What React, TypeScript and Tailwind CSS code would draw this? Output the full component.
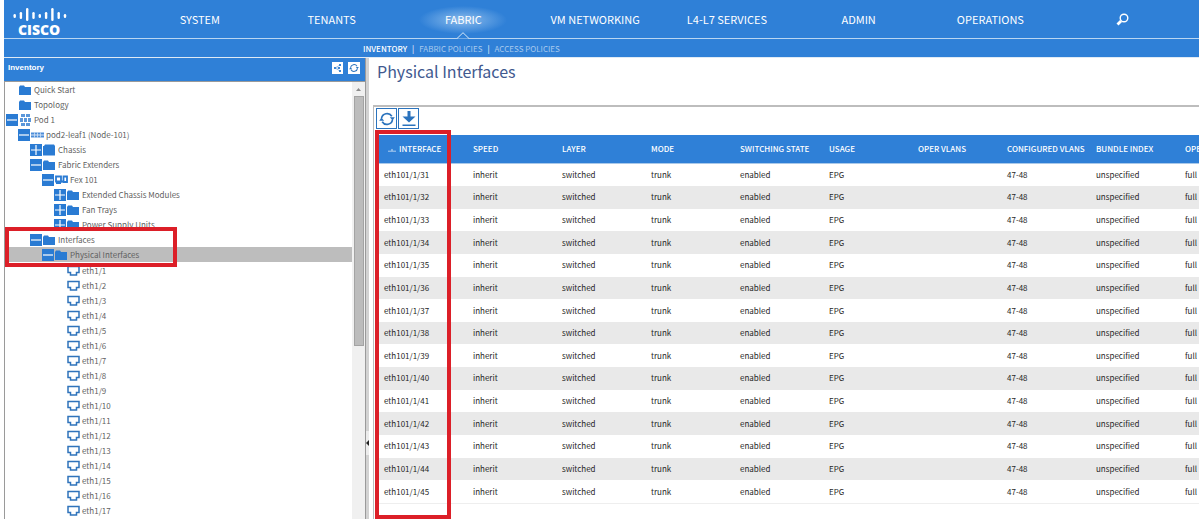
import type { ReactNode } from "react"
import clsx from "clsx"

const navItems = ["SYSTEM", "TENANTS", "FABRIC", "VM NETWORKING", "L4-L7 SERVICES", "ADMIN", "OPERATIONS"]

const subItems = ["INVENTORY", "FABRIC POLICIES", "ACCESS POLICIES"]

type IconName = "folder" | "pod" | "leaf" | "chassis" | "fex" | "port"

type TreeNode = {
  label: string
  icon: IconName
  depth: number
  toggle?: "open" | "closed"
  selected?: boolean
}

const tree: TreeNode[] = [
  { label: "Quick Start", icon: "folder", depth: 0 },
  { label: "Topology", icon: "folder", depth: 0 },
  { label: "Pod 1", icon: "pod", depth: 0, toggle: "open" },
  { label: "pod2-leaf1 (Node-101)", icon: "leaf", depth: 1, toggle: "open" },
  { label: "Chassis", icon: "chassis", depth: 2, toggle: "closed" },
  { label: "Fabric Extenders", icon: "folder", depth: 2, toggle: "open" },
  { label: "Fex 101", icon: "fex", depth: 3, toggle: "open" },
  { label: "Extended Chassis Modules", icon: "folder", depth: 4, toggle: "closed" },
  { label: "Fan Trays", icon: "folder", depth: 4, toggle: "closed" },
  { label: "Power Supply Units", icon: "folder", depth: 4, toggle: "closed" },
  { label: "Interfaces", icon: "folder", depth: 2, toggle: "open" },
  { label: "Physical Interfaces", icon: "folder", depth: 3, toggle: "open", selected: true },
]

const ports: TreeNode[] = Array.from({ length: 17 }, (_, i) => ({
  label: `eth1/${i + 1}`,
  icon: "port",
  depth: 4,
}))

const indent = ["pl-0", "pl-3", "pl-6", "pl-9", "pl-12"]

const columns = [
  "INTERFACE",
  "SPEED",
  "LAYER",
  "MODE",
  "SWITCHING STATE",
  "USAGE",
  "OPER VLANS",
  "CONFIGURED VLANS",
  "BUNDLE INDEX",
  "OPE",
]

const rows = Array.from({ length: 15 }, (_, i) => [
  `eth101/1/${31 + i}`,
  "inherit",
  "switched",
  "trunk",
  "enabled",
  "EPG",
  "",
  "47-48",
  "unspecified",
  "full",
])

const icons: Record<IconName, ReactNode> = {
  folder: <path d="M0 3 1 1.500h4L6 3h6v8H0z" fill="#2a7bd3" />,
  chassis: <path d="M1 2 2 .5h9L12 2v9.500H0V2z" fill="#2a7bd3" />,
  pod: (
    <g fill="#5b97da">
      <path d="M2 0h4v3H2zM7 0h4v3H7zM2 9h4v3H2zM7 9h4v3H7zM1 4h3v4H1zM5 4h3v4H5zM9 4h3v4H9z" />
    </g>
  ),
  leaf: (
    <g fill="#4c8dd8">
      <path d="M0 3.500h13v5H0z" />
      <path d="M0 5.600h13v.8H0zM3 3.500h.7v5H3zM6 3.500h.7v5H6zM9 3.500h.7v5H9z" fill="#dbe8f7" />
    </g>
  ),
  fex: (
    <g fill="none" stroke="#2a7bd3" strokeWidth="1.800">
      <path d="M1 2.500h5v5H1zM8.500 2.500H12v5.500H8.500z" />
      <path d="M6 7.500h3M1 9h5" />
    </g>
  ),
  port: <path d="M1 1.500h11v6H9.500V10h-6V7.500H1z" fill="#fff" stroke="#2f73bb" strokeWidth="1.500" />,
}

function Logo() {
  const bars = [
    [0, 6, 4],
    [6.2, 4, 7],
    [12.5, 0, 13],
    [18.8, 4, 7],
    [25.1, 6, 4],
    [31.4, 4, 7],
    [37.7, 0, 13],
    [44, 4, 7],
    [50.3, 6, 4],
  ]
  return (
    <div className="flex w-[130px] flex-col pt-2 pl-[9px] text-white">
      <svg viewBox="0 0 54 14" className="h-[14px] w-[54px]" aria-hidden="true">
        {bars.map(([x, y, h]) => (
          <rect key={x} x={x + 0.5} y={y} width="2.400" height={h} rx="1.200" fill="#fff" />
        ))}
      </svg>
      <span className="pl-[5px] font-['Open_Sans',sans-serif] text-[14px] leading-4 font-extrabold">CISCO</span>
    </div>
  )
}

function RefreshIcon({ className }: { className: string }) {
  return (
    <svg viewBox="0 0 16 16" className={className} aria-hidden="true">
      <path
        d="M2.500 7.500A5.600 5.600 0 0 1 12.800 5.200M13.500 8.500A5.600 5.600 0 0 1 3.200 10.800"
        fill="none"
        stroke="#2b73bd"
        strokeWidth="1.700"
      />
      <path d="M10.800 6.200h5L13.600 9.200zM.2 9.800h5L2.400 6.800z" fill="#2b73bd" />
    </svg>
  )
}

function TreeRow({ node }: { node: TreeNode }) {
  return (
    <li className={clsx("relative h-[15px] pl-px", node.selected && "bg-[#bdbdbd]")}>
      <div className={clsx("flex h-full items-center", indent[node.depth])}>
        {node.toggle ? (
          <button
            type="button"
            aria-label={node.label}
            className="flex h-3 w-3 items-center justify-center bg-[#2a7bd3]"
          >
            <svg viewBox="0 0 12 12" className="h-3 w-3" aria-hidden="true">
              <path d={node.toggle === "open" ? "M1 6h10" : "M1 6h10M6 1v10"} stroke="#fff" strokeWidth="1.200" />
            </svg>
          </button>
        ) : (
          <span className="w-3" />
        )}
        <svg viewBox="0 0 13 12" className="ml-px h-3 w-[13px]" aria-hidden="true">
          {icons[node.icon]}
        </svg>
        <a href="#" className="pl-[2px] text-[8px] leading-[15px] whitespace-nowrap text-[#5f5f5f]">
          {node.label}
        </a>
      </div>
      {node.selected && (
        <div className="pointer-events-none absolute -top-5 -bottom-[5px] left-0 z-10 w-[172px] border-4 border-[#dc1f28]" />
      )}
    </li>
  )
}

function Header() {
  return (
    <header className="bg-[#2f80d7] text-white">
      <div className="flex h-[39px] border-b border-[#b9d6f2] pr-[11px]">
        <Logo />
        <nav className="grid flex-1 grid-cols-8">
          {navItems.map((item) => (
            <a key={item} href="#" className="relative flex items-center justify-center text-[11px] whitespace-nowrap">
              {item === "FABRIC" && (
                <>
                  <span className="absolute top-1.5 h-7 w-[88px] bg-[radial-gradient(closest-side,#8cbcec,#2f80d700)]" />
                  <svg viewBox="0 0 12 7" className="absolute -bottom-px h-[7px] w-3" aria-hidden="true">
                    <path d="M0 6.500 6 .7l6 5.800" fill="#2f80d7" stroke="#d5e6f7" />
                  </svg>
                </>
              )}
              <span className="relative">{item}</span>
            </a>
          ))}
          <button type="button" aria-label="Search" className="flex items-center justify-center">
            <svg viewBox="0 0 13 13" className="h-[13px] w-[13px]" aria-hidden="true">
              <circle cx="8" cy="5" r="3.800" fill="none" stroke="#fff" strokeWidth="1.400" />
              <path d="M5 8 1.500 11.500" stroke="#fff" strokeWidth="2.800" />
            </svg>
          </button>
        </nav>
      </div>
      <nav className="mt-px flex h-[17px] items-center pl-[359px] text-[8px] leading-4">
        {subItems.map((item, i) => (
          <a key={item} href="#" className={i === 0 ? "font-medium" : "text-[#a9caee]"}>
            {i > 0 && <span className="px-[5px] text-white">|</span>}
            {item}
          </a>
        ))}
      </nav>
    </header>
  )
}

function Sidebar() {
  return (
    <aside className="flex w-[361px] shrink-0 flex-col">
      <div className="flex h-[23px] items-center bg-[#2f80d7] pr-[5px] pb-[3px] pl-[4px]">
        <h2 className="flex-1 font-['Liberation_Sans',Arial,sans-serif] text-[8px] font-bold text-white">Inventory</h2>
        <div className="flex gap-[5px]">
          <button type="button" aria-label="Share" className="flex h-3 w-[11px] items-center justify-center bg-white">
            <svg viewBox="0 0 10 10" className="h-[10px] w-[10px]" aria-hidden="true">
              <path d="M2 5 7 2M2 5h4M2 5l5 3" stroke="#8bb5e3" strokeWidth=".8" />
              <path d="M1 4h2v2H1zM6 1h2v2H6zM5 4h2v2H5zM6 7h2v2H6z" fill="#3f87d3" />
            </svg>
          </button>
          <button type="button" aria-label="Refresh tree" className="flex h-3 w-3 items-center justify-center bg-white">
            <RefreshIcon className="h-[10px] w-[10px]" />
          </button>
        </div>
      </div>
      <div className="flex flex-1 border-t border-l border-[#9a9a9a]">
        <ul className="flex-1 pb-px">
          {tree.map((node) => (
            <TreeRow key={node.label} node={node} />
          ))}
          <li className="pt-px">
            <ul>
              {ports.map((node) => (
                <TreeRow key={node.label} node={node} />
              ))}
            </ul>
          </li>
        </ul>
        <div className="flex w-[13px] flex-col items-center bg-[#f0f0f0]">
          <svg viewBox="0 0 13 14" className="h-[14px] w-[13px]" aria-hidden="true">
            <path d="M4 9h5L6.500 6z" fill="#8b8b8b" />
          </svg>
          <div className="h-[250px] w-[10px] border border-[#a3a3a3] bg-[#bcbcbc]" />
        </div>
      </div>
    </aside>
  )
}

function InterfaceTable() {
  return (
    <div className="relative mt-[6px] mb-[15px] ml-1 grid flex-1">
      <table className="w-full table-fixed border-collapse">
        <thead>
          <tr className="h-7 border-b border-[#a9c9ea] bg-[#2f80d7] text-left text-[8px] whitespace-nowrap text-white">
            {columns.map((column, i) => (
              <th key={column} scope="col" className={clsx("p-0 pl-[5px] font-medium", i < 9 && "w-[89px]")}>
                {i === 0 && (
                  <svg viewBox="0 0 10 6" className="mr-[3px] ml-1 inline h-[6px] w-2" aria-hidden="true">
                    <path d="M0 4.500h10" stroke="#cfe2f6" />
                    <path d="M3.500 3.500h3L5 1.500z" fill="#cfe2f6" />
                  </svg>
                )}
                {column}
              </th>
            ))}
          </tr>
        </thead>
        <tbody>
          {rows.map((row) => (
            <tr key={row[0]} className="text-[8px] leading-5 text-[#1f1f1f] last:border-b last:border-[#eeeeee] even:bg-[#e9e9e9]">
              {row.map((cell, i) => (
                <td key={i} className="p-0 pl-[5px] whitespace-nowrap">
                  {cell}
                </td>
              ))}
            </tr>
          ))}
        </tbody>
      </table>
      <div className="pointer-events-none absolute -top-[5px] -bottom-[15px] -left-1 w-[76px] border-4 border-[#dc1f28]" />
    </div>
  )
}

export default function App() {
  return (
    <div className="min-h-screen overflow-hidden bg-white pb-[5px] pl-1 font-['Noto_Sans_CJK_SC','Open_Sans',sans-serif]">
      <Header />
      <div className="flex border-t border-[#dfeaf5]">
        <Sidebar />
        <div className="flex w-1 shrink-0 flex-col justify-end border-l border-[#9a9a9a] bg-[#d2d2d2] pb-16">
          <button type="button" aria-label="Collapse panel" className="flex h-6 items-center bg-[#ececec]">
            <svg viewBox="0 0 3 6" className="h-[6px] w-[3px]" aria-hidden="true">
              <path d="M3 0v6L0 3z" fill="#222" />
            </svg>
          </button>
        </div>
        <main className="flex min-w-0 flex-1 flex-col pl-1">
          <h1 className="pt-px pb-[22px] pl-1 text-base leading-6 text-[#41598f]">Physical Interfaces</h1>
          <section className="flex flex-1 flex-col overflow-hidden border-t-2 border-l border-[#bdbdbd] pl-px">
            <div className="flex gap-px pt-px pl-px">
              <button
                type="button"
                aria-label="Refresh"
                className="flex h-[21px] w-[21px] items-center justify-center border border-[#2b73bd] bg-white"
              >
                <RefreshIcon className="h-4 w-4" />
              </button>
              <button
                type="button"
                aria-label="Download"
                className="flex h-[21px] w-[21px] items-center justify-center border border-[#2b73bd] bg-white"
              >
                <svg viewBox="0 0 16 17" className="h-[17px] w-4" aria-hidden="true">
                  <path d="M6.500 1h3v5.500H14.500L8 12.500 1.500 6.500h5zM1.500 14.500h13V16h-13z" fill="#2b73bd" />
                </svg>
              </button>
            </div>
            <InterfaceTable />
          </section>
        </main>
      </div>
    </div>
  )
}
